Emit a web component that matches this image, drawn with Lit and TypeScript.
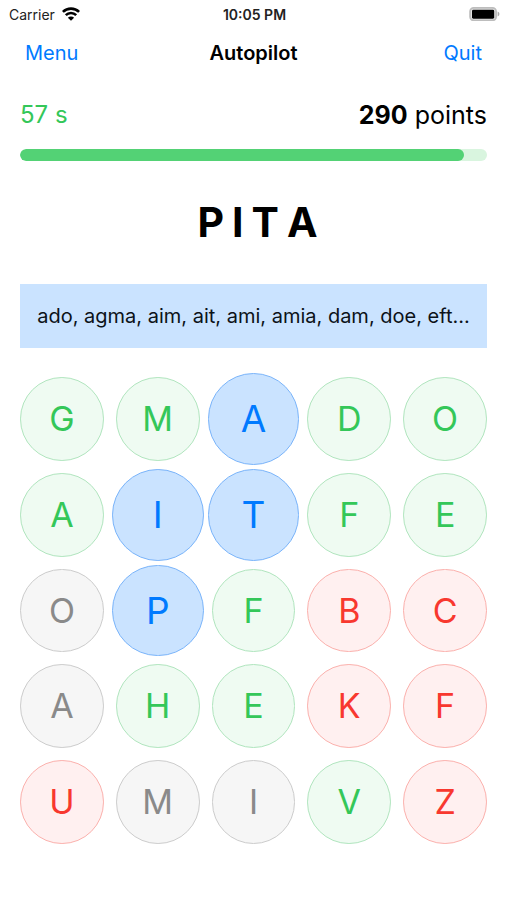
import { LitElement, html, css } from "lit";
import { customElement, property, state } from "lit/decorators.js";
import { classMap } from "lit/directives/class-map.js";

type Tone = "green" | "blue" | "gray" | "red";

interface Tile {
  letter: string;
  tone: Tone;
}

const parseRow = (row: string): Tile[] =>
  row.split(" ").map((cell) => ({
    letter: cell[0],
    tone: ({ g: "green", b: "blue", n: "gray", r: "red" } as Record<string, Tone>)[cell[1]],
  }));

@customElement("status-bar")
export class StatusBar extends LitElement {
  static styles = css`
    :host {
      display: grid;
      grid-template-columns: 1fr auto 1fr;
      align-items: center;
      height: 28px;
      padding: 0 7px 0 9px;
      font-size: 14px;
      color: #222;
    }
    .carrier {
      display: flex;
      align-items: center;
      gap: 7px;
    }
    .time {
      font-weight: 600;
    }
    .battery {
      justify-self: end;
    }
    svg {
      display: block;
    }
  `;

  render() {
    return html`
      <div class="carrier">
        <span>Carrier</span>
        <svg width="18" height="14" viewBox="0 0 18 14" aria-label="Wi-Fi" role="img">
          <g fill="none" stroke="#000" stroke-width="2.6">
            <path d="M0.9 4.9a11.6 11.6 0 0 1 16.2 0" />
            <path d="M3.8 8.2a7.4 7.4 0 0 1 10.4 0" />
          </g>
          <path d="M9 13.8L5.9 10.7a4.4 4.4 0 0 1 6.2 0z" fill="#000" />
        </svg>
      </div>
      <span class="time">10:05 PM</span>
      <svg class="battery" width="31" height="14" viewBox="0 0 31 14" aria-label="Battery full" role="img">
        <rect x="1.1" y="0.9" width="26" height="12.4" rx="3.6" fill="#e4e4e4" stroke="#bdbdbd" stroke-width="1.8" />
        <rect x="3" y="2.7" width="22.2" height="9" rx="1.4" fill="#000" />
        <path d="M28.6 4.6c2.4.8 2.4 4.2 0 5z" fill="#aaa" />
      </svg>
    `;
  }
}

@customElement("letter-tile")
export class LetterTile extends LitElement {
  @property() letter = "";
  @property() tone: Tone = "gray";

  static styles = css`
    :host {
      display: grid;
      aspect-ratio: 1;
      min-width: 0;
    }
    .tile {
      box-sizing: border-box;
      padding: 0;
      border: 1px solid;
      border-radius: 50%;
      font: 400 34px/40px Inter, sans-serif;
      cursor: pointer;
    }
    .green {
      color: #34c759;
      background: #effbf2;
      border-color: #b0e5be;
    }
    .gray {
      color: #8a8a8a;
      background: #f6f6f6;
      border-color: #cccccc;
    }
    .red {
      color: #f8382f;
      background: #fff0f0;
      border-color: #fbb0ac;
    }
    .blue {
      margin: -4px;
      font-size: 37px;
      color: #007aff;
      background: #cae3ff;
      border-color: #7ab4fa;
    }
  `;

  render() {
    return html`<button
      type="button"
      class=${classMap({ tile: true, [this.tone]: true })}
      aria-pressed=${this.tone === "blue" ? "true" : "false"}
    >${this.letter}</button>`;
  }
}

@customElement("app-root")
export class AppRoot extends LitElement {
  @state() private seconds = 57;
  @state() private limit = 60;
  @state() private points = 290;
  @state() private word = "PITA";
  @state() private found = ["ado", "agma", "aim", "ait", "ami", "amia", "dam", "doe", "eft..."];
  @state() private rows = [
    "Gg Mg Ab Dg Og",
    "Ag Ib Tb Fg Eg",
    "On Pb Fg Br Cr",
    "An Hg Eg Kr Fr",
    "Ur Mn In Vg Zr",
  ].map(parseRow);

  static styles = css`
    :host {
      display: block;
      min-height: 100vh;
      background: #fff;
      color: #000;
      font-family: Inter, sans-serif;
    }
    .nav {
      display: grid;
      grid-template-columns: 1fr auto 1fr;
      align-items: center;
      height: 50px;
      padding: 0 25px;
    }
    .nav button {
      justify-self: start;
      padding: 0;
      border: 0;
      background: none;
      font: 400 20px/24px Inter, sans-serif;
      color: #007aff;
      cursor: pointer;
    }
    .nav .quit {
      justify-self: end;
    }
    .title {
      margin: 0;
      font-size: 20px;
      line-height: 24px;
      font-weight: 600;
    }
    .game {
      padding: 20px;
    }
    .score {
      display: flex;
      justify-content: space-between;
      align-items: center;
      line-height: 34px;
    }
    .time {
      font-size: 24px;
      color: #34c759;
    }
    .points {
      font-size: 25px;
    }
    .points strong {
      font-weight: 700;
    }
    .track {
      height: 12px;
      margin-top: 17px;
      border-radius: 6px;
      background: #d9f5df;
      overflow: hidden;
    }
    .fill {
      height: 100%;
      border-radius: 6px;
      background: #53d275;
    }
    .word {
      display: flex;
      justify-content: center;
      margin: 37px 0;
      font-size: 41px;
      line-height: 49px;
      font-weight: 700;
    }
    .word span {
      margin-left: 8px;
    }
    .found {
      margin: 0;
      padding: 20px 16px;
      background: #cae3ff;
      color: #0c1218;
      font-size: 20px;
      line-height: 24px;
      text-align: center;
      white-space: nowrap;
      overflow: hidden;
    }
    .board {
      display: grid;
      grid-template-columns: repeat(5, minmax(0, 1fr));
      gap: 12px;
      margin-top: 29px;
    }
  `;

  render() {
    const share = (this.seconds / this.limit) * 100;
    return html`
      <status-bar></status-bar>
      <header class="nav">
        <button type="button">Menu</button>
        <h1 class="title">Autopilot</h1>
        <button type="button" class="quit">Quit</button>
      </header>
      <main class="game">
        <div class="score">
          <span class="time">${this.seconds} s</span>
          <span class="points"><strong>${this.points}</strong> points</span>
        </div>
        <div class="track" role="progressbar" aria-label="Time left" aria-valuemax=${this.limit} aria-valuenow=${this.seconds}>
          <div class="fill" style="width: ${share}%"></div>
        </div>
        <div class="word">${this.word.split("").map((letter) => html`<span>${letter}</span>`)}</div>
        <p class="found">${this.found.join(", ")}</p>
        <div class="board">
          ${this.rows.flat().map(
            (tile) => html`<letter-tile .letter=${tile.letter} .tone=${tile.tone}></letter-tile>`
          )}
        </div>
      </main>
    `;
  }
}
